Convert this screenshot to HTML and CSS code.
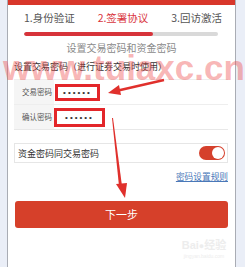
FILE: index.html
```html
<!DOCTYPE html>
<html>
<head>
<meta charset="utf-8">
<link rel="stylesheet" href="styles.css">
</head>
<body>
<div class="panel">
  <div class="topbar"></div>
  <div class="steps">
    <span class="step">1.身份验证</span>
    <span class="step active">2.签署协议</span>
    <span class="step">3.回访激活</span>
  </div>
  <div class="progress"><div class="progress-fill"></div></div>
  <div class="subtitle">设置交易密码和资金密码</div>
  <div class="title">设置交易密码（进行证券交易时使用）</div>
  <div class="form">
    <div class="row">
      <div class="label">交易密码</div>
      <div class="input box1">••••••</div>
    </div>
    <div class="row">
      <div class="label">确认密码</div>
      <div class="input box2">••••••</div>
    </div>
  </div>
  <div class="toggle-row">
    <span>资金密码同交易密码</span>
    <span class="switch"><span class="knob"></span></span>
  </div>
  <div class="link-row"><a class="link">密码设置规则</a></div>
  <div class="button">下一步</div>
  <div class="baidu">
    <div class="baidu-logo">Bai<span class="paw">●</span>经验</div>
    <div class="baidu-url">jingyan.baidu.com</div>
  </div>
</div>
<div class="watermark">www.tuiaxc.cn</div>
<svg class="arrows" width="245" height="267" viewBox="0 0 245 267">
  <line x1="164" y1="80" x2="116" y2="91" stroke="#e0302c" stroke-width="2.4"/>
  <polygon points="108,93 119,85 121,95" fill="#e0302c"/>
  <polygon points="112,118 113,118 122,186 119,186" fill="#e0302c"/>
  <polygon points="125,198 116,184 127,183" fill="#e0302c"/>
</svg>
</body>
</html>
```
FILE: styles.css
```css
html, body {
  margin: 0;
  padding: 0;
}
body {
  width: 245px;
  height: 267px;
  overflow: hidden;
  background: #eaeef7;
  font-family: "Noto Sans CJK SC", "Liberation Sans", sans-serif;
  position: relative;
}
.panel {
  margin: 0 9px 0 7px;
  height: 267px;
  background: #ffffff;
  border-left: 1px solid #a9acb4;
  border-right: 1px solid #a9acb4;
  position: relative;
}
.topbar {
  height: 5px;
  background: #d8372b;
}
.steps {
  display: flex;
  justify-content: space-between;
  padding: 6px 13px 0 16px;
  font-size: 10.5px;
  line-height: 14px;
  color: #555555;
}
.step.active {
  color: #d9363e;
}
.progress {
  margin: 7px 17px 0 16px;
  height: 4px;
  border-radius: 2px;
  background: #d9d9d9;
  overflow: hidden;
}
.progress-fill {
  width: 129px;
  height: 4px;
  background: #d7333a;
  border-radius: 2px;
}
.subtitle {
  margin-top: 5px;
  text-align: center;
  font-size: 10px;
  line-height: 14px;
  color: #8a8a8a;
}
.title {
  margin-top: 6px;
  padding-left: 6px;
  font-size: 9px;
  line-height: 12px;
  color: #333333;
}
.form {
  margin: 6px 7px 0 6px;
  border-bottom: 1px solid #e8e8e8;
}
.row {
  display: flex;
  align-items: center;
  height: 24px;
  border-top: 1px solid #eeeeee;
}
.label {
  width: 32px;
  height: 24px;
  padding-left: 8px;
  background: #f5f5f5;
  font-size: 7.5px;
  line-height: 24px;
  color: #555555;
}
.input {
  box-sizing: border-box;
  border: 3px solid #e3262a;
  background: #ffffff;
  font-size: 8px;
  letter-spacing: 2px;
  color: #333333;
  text-align: center;
  font-family: "Liberation Sans", sans-serif;
}
.box1 {
  margin-left: 1px;
  width: 45px;
  height: 17px;
  line-height: 11px;
}
.box2 {
  margin-left: 0;
  width: 51px;
  height: 19px;
  line-height: 13px;
}
.toggle-row {
  margin: 13px 7px 0 6px;
  height: 18px;
  border: 1px solid #e6e6e6;
  display: flex;
  align-items: center;
  justify-content: space-between;
  padding: 0 2px 0 3px;
  font-size: 9px;
  color: #333333;
}
.switch {
  width: 26px;
  height: 14px;
  border-radius: 7px;
  background: #d5402c;
  position: relative;
  display: block;
}
.knob {
  position: absolute;
  right: 1px;
  top: 1px;
  width: 12px;
  height: 12px;
  border-radius: 50%;
  background: #ffffff;
}
.link-row {
  margin: 8px 7px 0 6px;
  text-align: right;
  font-size: 8.7px;
  line-height: 12px;
}
.link {
  color: #4a78b8;
  text-decoration: underline;
}
.button {
  margin: 18px 7px 0 7px;
  height: 27px;
  border-radius: 3px;
  background: #d6402a;
  color: #ffffff;
  text-align: center;
  font-size: 11px;
  line-height: 27px;
}
.baidu {
  position: absolute;
  left: 170px;
  top: 238px;
  width: 52px;
  text-align: center;
  color: #ededed;
}
.baidu-logo {
  font-family: "Liberation Sans", "Noto Sans CJK SC", sans-serif;
  font-size: 11px;
  font-weight: bold;
  line-height: 14px;
  white-space: nowrap;
}
.paw {
  font-size: 9px;
}
.baidu-url {
  font-family: "Liberation Sans", sans-serif;
  font-size: 5px;
  line-height: 7px;
}
.watermark {
  position: absolute;
  left: 3px;
  top: 47px;
  font-family: "Liberation Sans", sans-serif;
  font-weight: bold;
  font-size: 35px;
  line-height: 42px;
  color: rgba(238, 80, 80, 0.42);
  white-space: nowrap;
}
.arrows {
  position: absolute;
  left: 0;
  top: 0;
}
```
